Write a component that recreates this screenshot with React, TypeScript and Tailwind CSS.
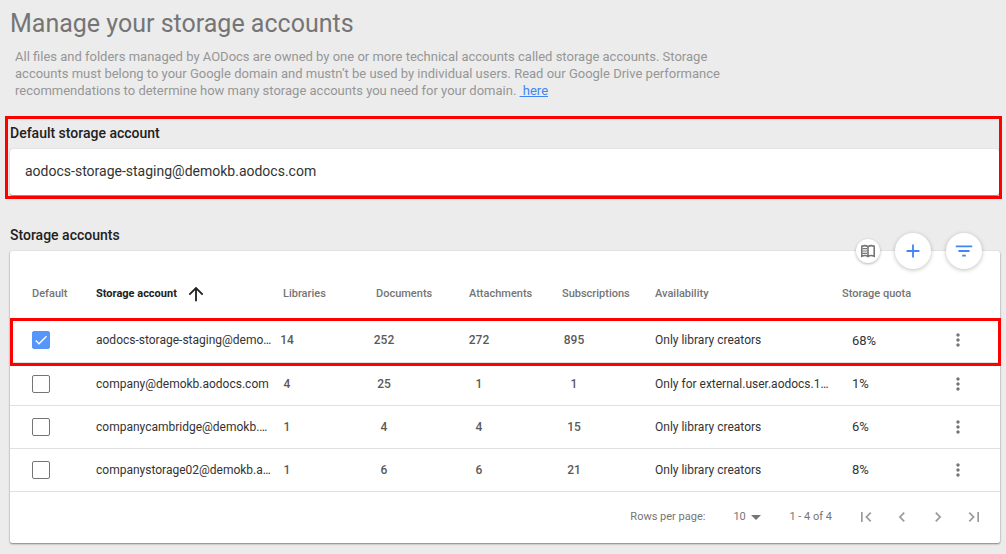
import React, { useState } from "react";

type Account = {
  email: string;
  libraries: number;
  documents: number;
  attachments: number;
  subscriptions: number;
  availability: string;
  quota: string;
};

const accounts: Account[] = [
  { email: "aodocs-storage-staging@demo…", libraries: 14, documents: 252, attachments: 272, subscriptions: 895, availability: "Only library creators", quota: "68%" },
  { email: "company@demokb.aodocs.com", libraries: 4, documents: 25, attachments: 1, subscriptions: 1, availability: "Only for external.user.aodocs.1…", quota: "1%" },
  { email: "companycambridge@demokb.…", libraries: 1, documents: 4, attachments: 4, subscriptions: 15, availability: "Only library creators", quota: "6%" },
  { email: "companystorage02@demokb.a…", libraries: 1, documents: 6, attachments: 6, subscriptions: 21, availability: "Only library creators", quota: "8%" },
];

const paths = {
  plus: "M19 13h-6v6h-2v-6H5v-2h6V5h2v6h6v2z",
  filter: "M10 18h4v-2h-4v2zM3 6v2h18V6H3zm3 7h12v-2H6v2z",
  up: "M4 12l1.41 1.41L11 7.83V20h2V7.83l5.58 5.59L20 12l-8-8-8 8z",
  more: "M12 8c1.1 0 2-.9 2-2s-.9-2-2-2-2 .9-2 2 .9 2 2 2zm0 2c-1.1 0-2 .9-2 2s.9 2 2 2 2-.9 2-2-.9-2-2-2zm0 6c-1.1 0-2 .9-2 2s.9 2 2 2 2-.9 2-2-.9-2-2-2z",
  first: "M18.41 16.59L13.82 12l4.59-4.59L17 6l-6 6 6 6 1.41-1.41zM6 6h2v12H6V6z",
  prev: "M15.41 7.41L14 6l-6 6 6 6 1.41-1.41L10.83 12l4.58-4.59z",
  next: "M10 6L8.59 7.41 13.17 12l-4.58 4.59L10 18l6-6-6-6z",
  last: "M5.59 7.41L10.18 12l-4.59 4.59L7 18l6-6-6-6-1.41 1.41zM16 6h2v12h-2V6z",
  check: "M9 16.17L4.83 12l-1.42 1.41L9 19 21 7l-1.41-1.41L9 16.17z",
};

function Icon({ name, className }: { name: keyof typeof paths; className: string }) {
  return (
    <svg viewBox="0 0 24 24" fill="currentColor" aria-hidden="true" className={className}>
      <path d={paths[name]} />
    </svg>
  );
}

function BookIcon() {
  return (
    <svg viewBox="0 0 16 16" fill="none" stroke="currentColor" aria-hidden="true" className="size-4">
      <path
        strokeWidth="1.6"
        d="M8 3.6C6.600 2.700 3.500 2.500 1.800 3.300V13.200C3.500 12.500 6.600 12.600 8 13.500C9.400 12.600 12.500 12.500 14.200 13.200V3.300C12.500 2.500 9.400 2.700 8 3.600V13.500"
      />
      <path strokeWidth="1.2" d="M2.500 5.700h4.500M2.500 8h4.500M2.500 10.300h4.500" />
    </svg>
  );
}

function Count({ value, width }: { value: number; width: string }) {
  return (
    <td className="font-medium text-[#5a5a5a]">
      <span className={`block text-center ${width}`}>{value}</span>
    </td>
  );
}

function Row({ account, selected, onSelect }: { account: Account; selected: boolean; onSelect: () => void }) {
  return (
    <tr className="h-[43px] border-b border-[#e0e0e0] text-[12px]">
      <td className="pl-[22px]">
        <label className="relative block size-[18px]">
          <input
            type="checkbox"
            aria-label={account.email}
            checked={selected}
            onChange={onSelect}
            className="block size-[18px] appearance-none rounded-[2px] border border-[#757575] bg-white checked:border-[#5695f9] checked:bg-[#5695f9]"
          />
          {selected && <Icon name="check" className="pointer-events-none absolute top-px left-px size-4 text-white" />}
        </label>
      </td>
      <td className="whitespace-nowrap">{account.email}</td>
      <Count value={account.libraries} width="w-10" />
      <Count value={account.documents} width="w-12" />
      <Count value={account.attachments} width="w-13" />
      <Count value={account.subscriptions} width="w-14" />
      <td className="pl-4 whitespace-nowrap">{account.availability}</td>
      <td className="pl-[26px] text-[13px]">{account.quota}</td>
      <td className="pl-[10px]">
        <button type="button" aria-label="More actions" className="block text-[#757575]">
          <Icon name="more" className="size-6 p-[2px]" />
        </button>
      </td>
    </tr>
  );
}

export default function App() {
  const [selected, setSelected] = useState(0);
  return (
    <main className="min-h-screen bg-[#ececec] pt-2 pr-[6px] pb-[11px] pl-[10px] font-['Roboto',sans-serif] text-[#333333]">
      <h1 className="text-[25px] leading-[32px] text-[#757575]">Manage your storage accounts</h1>
      <p className="mt-2 max-w-[710px] pl-[5px] text-[13px] leading-[17px] text-[#969696]">
        All files and folders managed by AODocs are owned by one or more technical accounts called storage accounts. Storage
        accounts must belong to your Google domain and mustn’t be used by individual users. Read our Google Drive performance
        recommendations to determine how many storage accounts you need for your domain.{" "}
        <a href="#here" className="text-[#4285f4] underline">{"\u00a0here"}</a>
      </p>

      <section className="mt-[17px] -mr-[2px] -ml-[5px] border-3 border-[#ff0000] pl-[2px]">
        <h2 className="pt-1 pb-[5px] text-[14px] leading-[21px] font-medium text-[#212121]">Default storage account</h2>
        <div className="rounded-[2px] bg-white px-[15px] pt-3 pb-[14px] text-[14px] leading-[20px] shadow-[0_1px_1px_rgba(0,0,0,0.4),0_0_1px_rgba(0,0,0,0.3)]">
          aodocs-storage-staging@demokb.aodocs.com
        </div>
        <div className="h-px" />
      </section>

      <h2 className="mt-[26px] mb-[6px] text-[14px] leading-[20px] font-medium text-[#212121]">Storage accounts</h2>
      <section className="relative rounded-[2px] bg-white shadow-[0_1px_2px_rgba(0,0,0,0.45),0_0_1px_rgba(0,0,0,0.2)]">
        <div className="absolute -top-[18px] right-[18px] flex items-center gap-[15px]">
          <button type="button" aria-label="Documentation" className="grid size-6 place-items-center rounded-full bg-white text-[#757575] shadow-[0_1px_3px_rgba(0,0,0,0.3)]">
            <BookIcon />
          </button>
          <button type="button" aria-label="Add storage account" className="grid size-9 place-items-center rounded-full bg-white text-[#4285f4] shadow-[0_1px_4px_rgba(0,0,0,0.25)]">
            <Icon name="plus" className="size-[22px]" />
          </button>
          <button type="button" aria-label="Filter" className="grid size-9 place-items-center rounded-full bg-white text-[#4285f4] shadow-[0_1px_4px_rgba(0,0,0,0.25)]">
            <Icon name="filter" className="size-[22px]" />
          </button>
        </div>

        <table className="w-full table-fixed border-collapse text-left text-[11px]">
          <colgroup>
            <col className="w-[86px]" />
            <col className="w-[171px]" />
            <col className="w-[93px]" />
            <col className="w-[93px]" />
            <col className="w-[93px]" />
            <col className="w-[93px]" />
            <col />
            <col className="w-[110px]" />
            <col className="w-[64px]" />
          </colgroup>
          <thead>
            <tr className="h-[68px] whitespace-nowrap text-[#757575] [&>th]:pt-[18px] [&>th]:font-medium">
              <th className="pl-[22px]">Default</th>
              <th aria-sort="ascending">
                <button type="button" className="flex items-center gap-2 font-bold text-[#212121]">
                  Storage account
                  <Icon name="up" className="size-[22px]" />
                </button>
              </th>
              <th className="pl-4">Libraries</th>
              <th className="pl-4">Documents</th>
              <th className="pl-4">Attachments</th>
              <th className="pl-4">Subscriptions</th>
              <th className="pl-4">Availability</th>
              <th className="pl-4">Storage quota</th>
              <th aria-label="Actions" />
            </tr>
          </thead>
          <tbody>
            {accounts.map((account, i) => (
              <Row key={account.email} account={account} selected={selected === i} onSelect={() => setSelected(i)} />
            ))}
          </tbody>
        </table>
        <div className="pointer-events-none absolute top-[67px] -right-px left-0 h-12 border-3 border-[#ff0000]" />

        <div className="flex h-[51px] items-center justify-end pr-2 text-[11px] text-[#757575]">
          <label htmlFor="rows">Rows per page:</label>
          <div className="relative ml-7">
            <select id="rows" className="block w-[28px] appearance-none" defaultValue="10">
              <option>10</option>
              <option>25</option>
            </select>
            <svg viewBox="0 0 10 5" fill="currentColor" aria-hidden="true" className="pointer-events-none absolute top-[6px] right-0 h-[5px] w-[10px]">
              <path d="M0 0h10L5 5z" />
            </svg>
          </div>
          <span className="ml-7">1 - 4 of 4</span>
          <div className="ml-4 flex text-[#9a9a9a]">
            <button type="button" aria-label="First page" className="grid size-9 place-items-center"><Icon name="first" className="size-5" /></button>
            <button type="button" aria-label="Previous page" className="grid size-9 place-items-center"><Icon name="prev" className="size-5" /></button>
            <button type="button" aria-label="Next page" className="grid size-9 place-items-center"><Icon name="next" className="size-5" /></button>
            <button type="button" aria-label="Last page" className="grid size-9 place-items-center"><Icon name="last" className="size-5" /></button>
          </div>
        </div>
      </section>
    </main>
  );
}
